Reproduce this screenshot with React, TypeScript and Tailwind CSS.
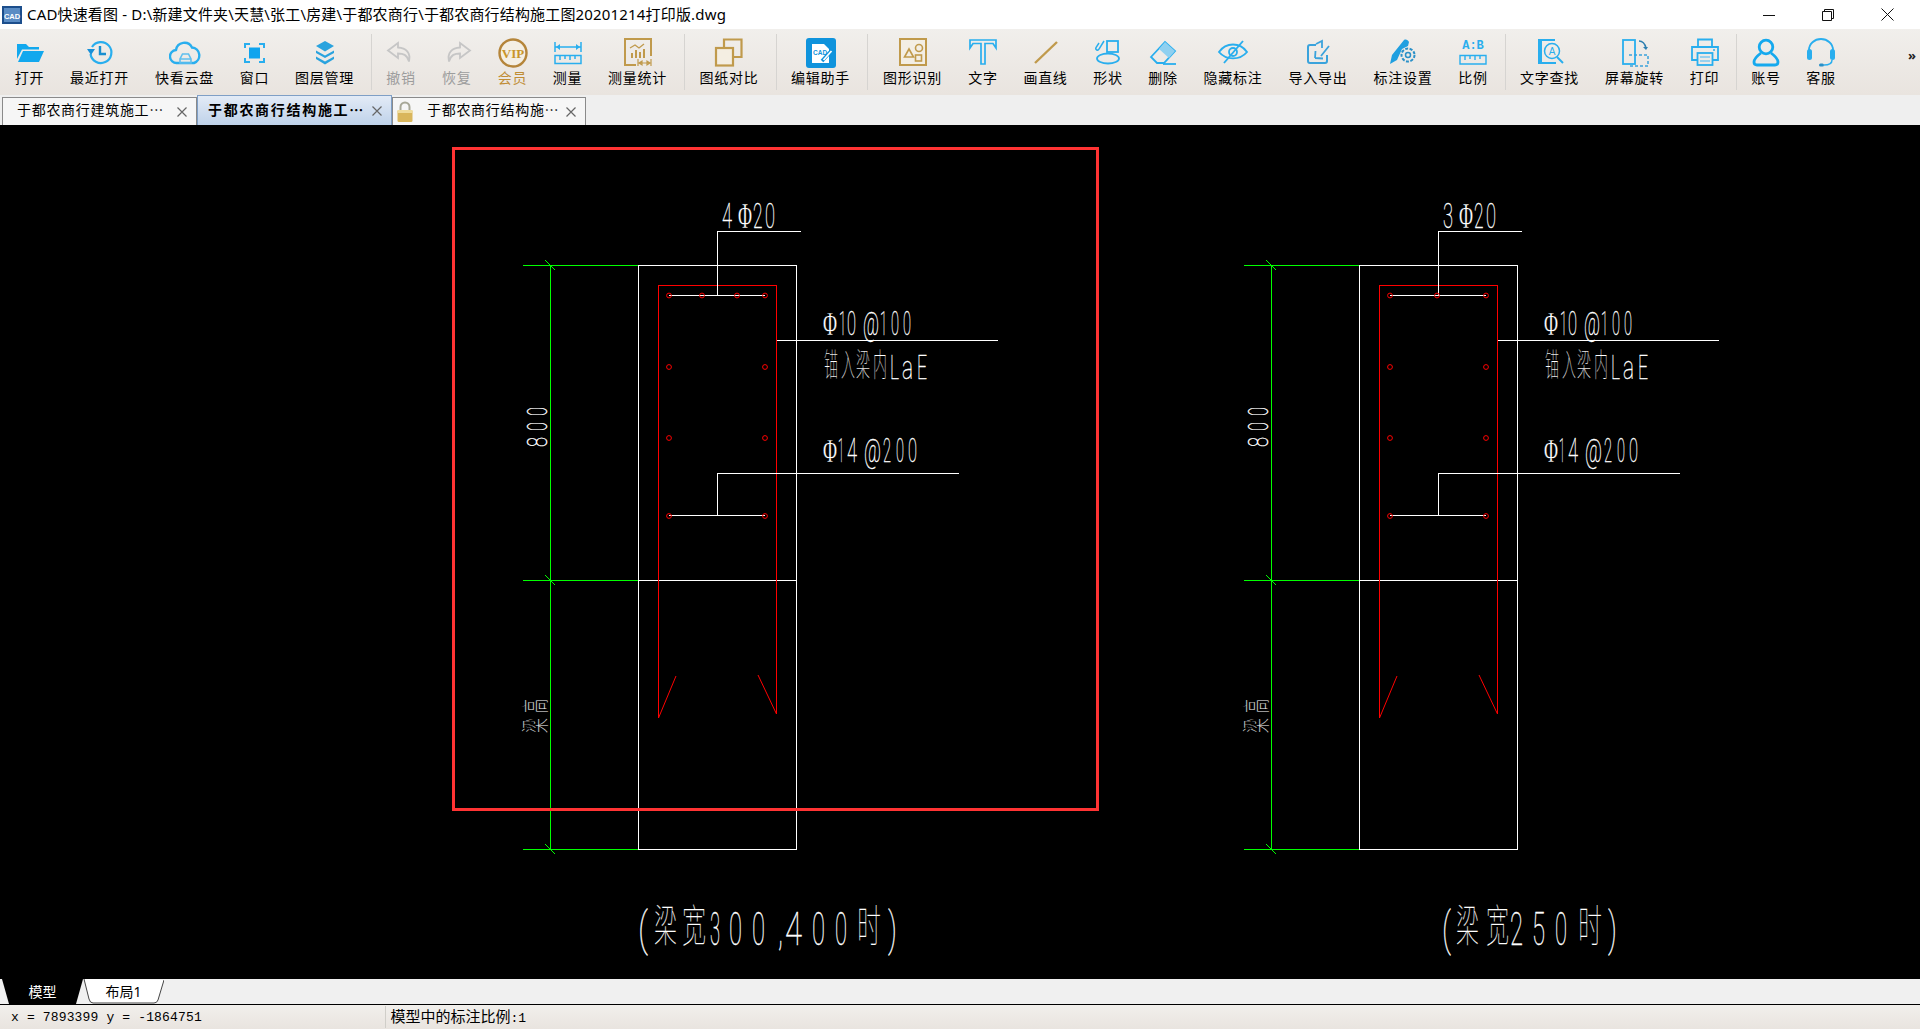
import React from "react";

const B = "#29aeee";
const G = "#c09a4c";

function Ic({ children }: { children: React.ReactNode }) {
  return (
    <svg width="32" height="30" viewBox="0 0 32 30" fill="none" className="block">
      {children}
    </svg>
  );
}

const icons: Record<string, React.ReactNode> = {
  open: (
    <>
      <path d="M3 6h9l3 3h10v2.500H8L3 21z" fill="#12a8ee" />
      <path d="M9 13h21l-5 11H4z" fill="#12a8ee" />
    </>
  ),
  recent: (
    <>
      <path d="M8 9a10.500 10.500 0 1 1-1.500 7" stroke={B} strokeWidth="2.200" />
      <path d="M3 11h8l-4 6z" fill="#1890d8" />
      <path d="M16 8v8h6" stroke="#1a8fd0" strokeWidth="2.400" />
    </>
  ),
  cloud: (
    <>
      <path d="M8 25a6.500 6.500 0 0 1-1-13 8.500 8.500 0 0 1 16-2.500A8 8 0 0 1 25 25z" stroke={B} strokeWidth="2.400" />
      <path d="M11 25v-4l2.500-5h6l2.500 5v4zM11 21h11" stroke="#5fbfee" strokeWidth="1.600" />
    </>
  ),
  win: (
    <>
      <path d="M6 10V6h5M20 6h5v4M25 20v4h-5M11 24H6v-4" stroke={B} strokeWidth="2" />
      <rect x="10" y="9.500" width="11" height="11" fill="#0fa4ee" />
    </>
  ),
  layer: (
    <>
      <path d="M16 3l9 5-9 5.500L7 8z" fill="#2aa3de" />
      <path d="M7 12.500l9 5 9-5v2.500l-9 5-9-5z" fill="#2aa3de" />
      <path d="M7 18.500l9 5 9-5v2.500l-9 5.500-9-5.500z" fill="#2aa3de" />
    </>
  ),
  undo: <path d="M13 5L3 12.500l10 7.500v-4.500c5 0 9 1 11 8 2-9-3-13.500-11-14z" stroke="#c6c6c6" strokeWidth="1.800" />,
  redo: <path d="M19 5l10 7.500-10 7.500v-4.500c-5 0-9 1-11 8-2-9 3-13.500 11-14z" stroke="#c6c6c6" strokeWidth="1.800" />,
  vip: (
    <>
      <circle cx="16" cy="15" r="13.500" fill="#f4efe4" stroke="#b5853a" strokeWidth="2.400" />
      <text x="16" y="19.500" textAnchor="middle" fontSize="13" fontWeight="700" fill="#c9952a" fontFamily="Liberation Serif, serif">VIP</text>
    </>
  ),
  measure: (
    <>
      <path d="M3 4v10M29 4v10M3 9h26" stroke={B} strokeWidth="1.500" />
      <path d="M4 9l4-3v6zM28 9l-4-3v6z" fill={B} />
      <path d="M3 17.500h26v8H3zM8 18v4M13 18v3M18 18v4M23 18v3" stroke={B} strokeWidth="1.500" />
    </>
  ),
  stat: (
    <>
      <path d="M14 27H3V1h26v17" stroke={G} strokeWidth="2" />
      <path d="M8 10l5-3 4 3 5-4" stroke={G} strokeWidth="1.300" />
      <path d="M9 20v-5h2v5zM13 20v-8h2v8zM17 20v-6h2v6zM21 20v-9h2v9z" fill={G} />
      <path d="M16 25h13M16 21v7M29 21v7M17 25l3-2v4zM28 25l-3-2v4z" stroke={G} strokeWidth="1.200" />
    </>
  ),
  compare: (
    <>
      <path d="M11 10V1.500h17.500V19H20" stroke={G} strokeWidth="2.200" />
      <rect x="3" y="10" width="17" height="17.500" fill="#f4eee2" stroke={G} strokeWidth="2.200" />
    </>
  ),
  edit: (
    <>
      <rect x="1" y="0" width="30" height="30" rx="3" fill="#0f93dc" />
      <path d="M7 6h12l5 5v14H7z" fill="#fff" />
      <text x="8" y="17" fontSize="6.500" fontWeight="700" fill="#0f93dc" fontFamily="Liberation Sans, sans-serif">CAD</text>
      <path d="M17 23l10-11" stroke="#0f93dc" strokeWidth="3.500" />
      <path d="M18.500 22l8-9" stroke="#fff" strokeWidth="1.800" />
    </>
  ),
  shape: (
    <>
      <rect x="3" y="1" width="26" height="26" fill="#f3eee4" stroke={G} strokeWidth="2" />
      <path d="M12 11l4.500 8h-9z" stroke={G} strokeWidth="1.600" />
      <circle cx="22" cy="10" r="3.500" stroke={G} strokeWidth="1.600" />
      <rect x="18.500" y="17" width="6" height="6" stroke={G} strokeWidth="1.600" />
    </>
  ),
  text: <path d="M3 2h26v8l-3-4.500H18V26h-4V5.500H6L3 10z" stroke={B} strokeWidth="1.700" />,
  line: <path d="M5 25L27 4" stroke={G} strokeWidth="2.400" />,
  shapes: (
    <>
      <rect x="15" y="3" width="11" height="11" stroke={B} strokeWidth="1.800" />
      <ellipse cx="16" cy="20.500" rx="11" ry="5" stroke={B} strokeWidth="1.800" />
      <path d="M12 3L7 11c-1 2-4 1-3-1.500L7 5" stroke={B} strokeWidth="1.500" />
    </>
  ),
  eraser: (
    <>
      <path d="M4 19L18 4l10 9-11 12H10z" stroke={B} strokeWidth="1.800" />
      <path d="M12 11L18 4l10 9-6 7z" fill="#8fd0f0" />
      <path d="M16 26h13" stroke={B} strokeWidth="1.800" />
    </>
  ),
  eye: (
    <>
      <path d="M2 14c7-10 21-10 28 0-7 8.500-21 8.500-28 0z" stroke={B} strokeWidth="1.900" />
      <circle cx="16" cy="14" r="4" stroke={B} strokeWidth="1.800" />
      <path d="M7 25L26 3" stroke={B} strokeWidth="1.900" />
    </>
  ),
  io: (
    <>
      <path d="M14 7H8a2 2 0 0 0-2 2v14a2 2 0 0 0 2 2h15a2 2 0 0 0 2-2v-6" stroke="#3aa3dc" strokeWidth="2" />
      <path d="M14 6l6-3v7M27 8L19 18M13 20l8 .500M13 20l.500-7" stroke="#3aa3dc" strokeWidth="1.800" />
    </>
  ),
  markset: (
    <>
      <path d="M3 26l2-9L17 2c2-1 4 0 5 2l-1 4-6 3-5 11z" fill="#1f9fe0" />
      <circle cx="21" cy="17" r="6.500" fill="#eceae6" stroke="#2a90c8" strokeWidth="2" strokeDasharray="3 1.500" />
      <circle cx="21" cy="17" r="2.500" stroke="#2a90c8" strokeWidth="1.500" />
    </>
  ),
  scale: (
    <>
      <text x="16" y="11" textAnchor="middle" fontSize="12" fontWeight="700" fill={B} fontFamily="Liberation Mono, monospace">A:B</text>
      <path d="M3 17.500h26v8.500H3zM8 18v4M13 18v3M18 18v4M23 18v3" stroke={B} strokeWidth="1.400" />
    </>
  ),
  find: (
    <>
      <path d="M21 2H5v23h17" stroke={B} strokeWidth="2" />
      <path d="M5 2h3v23H5z" fill={B} />
      <circle cx="18" cy="13" r="7.500" stroke={B} strokeWidth="1.500" />
      <text x="18" y="17" textAnchor="middle" fontSize="10" fill={B} fontFamily="Liberation Sans, sans-serif">A</text>
      <path d="M23 19l6 6" stroke={B} strokeWidth="2" />
    </>
  ),
  rotate: (
    <>
      <rect x="4" y="2" width="12" height="24" stroke={B} strokeWidth="1.800" />
      <path d="M10 17h19v11H10" stroke="#3aa3dc" strokeWidth="1.500" strokeDasharray="3 2" />
      <path d="M20 3c4 0 6 3 7 7" stroke="#2d7fb0" strokeWidth="1.500" />
      <path d="M27 12l-3-3h5z" fill="#2d7fb0" />
    </>
  ),
  print: (
    <>
      <path d="M9 9V1.500h14V9" stroke={B} strokeWidth="1.800" />
      <path d="M8 22H3V9h26v13h-5" stroke={B} strokeWidth="1.800" />
      <rect x="8.500" y="15" width="15" height="12" fill="#eceae6" stroke={B} strokeWidth="1.800" />
      <path d="M11 19h10M11 23h10" stroke="#7cc8ef" strokeWidth="1.500" />
      <circle cx="25" cy="12" r="1" fill={B} />
    </>
  ),
  user: (
    <>
      <circle cx="16" cy="9" r="6.800" stroke="#15a9ee" strokeWidth="2.800" />
      <path d="M11 15C7 18 4 21 4 24c0 2 1 3 3 3h18c2 0 3-1 3-3 0-3-3-6-7-9" stroke="#15a9ee" strokeWidth="2.800" />
    </>
  ),
  service: (
    <>
      <path d="M4 16V12a12 11 0 0 1 24 0v4" stroke={B} strokeWidth="1.800" />
      <rect x="2" y="11" width="5" height="11" rx="2.500" fill={B} />
      <rect x="25" y="11" width="5" height="11" rx="2.500" fill={B} />
      <path d="M27 22c0 3-3 5-8 5" stroke={B} strokeWidth="1.500" />
      <rect x="14" y="25.500" width="5" height="3" rx="1.500" fill="#2a90c8" />
    </>
  ),
};

type Item = { l: string; i: string; w: string; c?: string } | { sep: true };

const W2 = "w-[55px]";
const W3 = "w-[70px]";
const W4 = "w-[85px]";

const items: Item[] = [
  { l: "打开", i: "open", w: W2 },
  { l: "最近打开", i: "recent", w: W4 },
  { l: "快看云盘", i: "cloud", w: W4 },
  { l: "窗口", i: "win", w: W2 },
  { l: "图层管理", i: "layer", w: W4 },
  { sep: true },
  { l: "撤销", i: "undo", w: W2, c: "text-[#9d9d9d]" },
  { l: "恢复", i: "redo", w: "w-[56.500px]", c: "text-[#9d9d9d]" },
  { l: "会员", i: "vip", w: W2, c: "text-[#c08d35]" },
  { l: "测量", i: "measure", w: W2 },
  { l: "测量统计", i: "stat", w: W4 },
  { sep: true },
  { l: "图纸对比", i: "compare", w: W4 },
  { sep: true },
  { l: "编辑助手", i: "edit", w: W4 },
  { sep: true },
  { l: "图形识别", i: "shape", w: "w-[86px]" },
  { l: "文字", i: "text", w: W2 },
  { l: "画直线", i: "line", w: W3 },
  { l: "形状", i: "shapes", w: W2 },
  { l: "删除", i: "eraser", w: W2 },
  { l: "隐藏标注", i: "eye", w: W4 },
  { l: "导入导出", i: "io", w: W4 },
  { l: "标注设置", i: "markset", w: W4 },
  { l: "比例", i: "scale", w: W2 },
  { sep: true },
  { l: "文字查找", i: "find", w: W4 },
  { l: "屏幕旋转", i: "rotate", w: W4 },
  { l: "打印", i: "print", w: W2 },
  { sep: true },
  { l: "账号", i: "user", w: W2 },
  { l: "客服", i: "service", w: W2 },
];

function ToolBar() {
  return (
    <div className="relative flex h-[66px] bg-gradient-to-b from-[#f1efec] to-[#e9e4df] pl-[2px]">
      {items.map((it, n) =>
        "sep" in it ? (
          <div key={n} className="ml-1 mr-[1.500px] mt-[5px] h-[56px] w-px bg-[#d6d4d1]" />
        ) : (
          <div key={n} className={`flex flex-col items-center pt-[9px] ${it.w}`}>
            <Ic>{icons[it.i]}</Ic>
            <span className={`whitespace-nowrap text-[14px] leading-[19px] tracking-[0.7px] ${it.c ?? "text-black"}`}>{it.l}</span>
          </div>
        )
      )}
      <span className="absolute right-[4px] top-[20px] text-[13px] font-bold leading-none text-[#222]">»</span>
    </div>
  );
}

function Close() {
  return (
    <svg width="10" height="10" viewBox="0 0 10 10" className="shrink-0">
      <path d="M.5.5l9 9M9.500.5l-9 9" stroke="#666" strokeWidth="1.200" />
    </svg>
  );
}

function Lock() {
  return (
    <svg width="18" height="22" viewBox="0 0 18 22" className="shrink-0">
      <path d="M4.500 10V6a4.500 4.500 0 0 1 9 0v4" fill="none" stroke="#a8a898" strokeWidth="2" />
      <rect x="1.500" y="9" width="15" height="12" rx="1.500" fill="#d9b65c" />
      <rect x="1.500" y="9" width="15" height="3" fill="#efdc9c" />
    </svg>
  );
}

function DocTabs() {
  return (
    <div className="flex h-[30px] items-end bg-[#efefef] pl-[2px]">
      <div className="flex h-[28px] w-[195px] items-center border border-b-0 border-[#8a8a8a] bg-[#f6f6f6] pl-[14px] pr-[9px]">
        <span className="flex-1 whitespace-nowrap pb-[5px] text-[14px] tracking-[0.7px]">于都农商行建筑施工⋯</span>
        <Close />
      </div>
      <div className="flex h-[30px] w-[195px] items-center border border-b-0 border-[#7f9fc6] bg-gradient-to-b from-[#e3ebf6] to-[#bfd2ea] pl-[10px] pr-[9px]">
        <span className="flex-1 whitespace-nowrap pb-[3px] text-[14px] font-bold tracking-[1.700px]">于都农商行结构施工⋯</span>
        <Close />
      </div>
      <div className="flex h-[28px] w-[194px] items-center border border-b-0 border-[#8a8a8a] bg-[#f6f6f6] pl-[3px] pr-[9px]">
        <Lock />
        <span className="ml-[13px] flex-1 whitespace-nowrap pb-[5px] text-[14px] tracking-[0.7px]">于都农商行结构施⋯</span>
        <Close />
      </div>
    </div>
  );
}

const LAT = "Roboto, Liberation Sans, sans-serif";
const CJK = "Noto Sans CJK SC, sans-serif";

type Tok = [string, number, number];

function Toks({ y, size, toks, cjk }: { y: number; size: number; toks: Tok[]; cjk?: boolean }) {
  return (
    <>
      {toks.map(([s, x, w], n) => {
        const phi = s === "Φ";
        return (
          <text
            key={n}
            x={x}
            y={y}
            textLength={w}
            lengthAdjust="spacingAndGlyphs"
            fontSize={size}
            fontWeight={phi ? 400 : 100}
            fontFamily={phi ? "Liberation Serif, serif" : cjk ? CJK : LAT}
            fill="#fff"
            stroke={cjk ? "#000" : phi ? "#000" : "#fff"}
            strokeWidth={cjk ? 0.15 : phi ? 0.3 : 0.4}
          >
            {s}
          </text>
        );
      })}
    </>
  );
}

function Tick({ y }: { y: number }) {
  return <path d={`M545 ${y - 5}L555 ${y + 5}`} stroke="#00ff00" />;
}

function Beam({ dx, num, dots }: { dx: number; num: string; dots: number[] }) {
  const red = [
    ...dots.map((x) => [x, 295.5]),
    [669, 367],
    [765, 367],
    [669, 438],
    [765, 438],
    [669, 516],
    [765, 516],
  ];
  return (
    <g transform={`translate(${dx} 0)`}>
      <g shapeRendering="crispEdges">
        <path d="M523 265.500H638.500M523 580.500H638.500M523 849.500H638.500M550.500 265V850" stroke="#00ff00" />
        <path d="M638.500 265.500H796.500V849.500H638.500ZM638.500 580.500H796.500" stroke="#fff" fill="none" />
        <path d="M658.500 718V285.500H776.500V714" stroke="#ff0000" fill="none" />
        <path d="M717.500 295V231.500H801M669 295.500H765M777 340.500H998M669 515.500H765M717.500 515V473.500H959" stroke="#fff" fill="none" />
      </g>
      <path d="M658.500 718L676 676M776.500 714L758 675" stroke="#ff0000" />
      <Tick y={265} />
      <Tick y={580} />
      <Tick y={849} />
      {red.map(([x, y], n) => (
        <circle key={n} cx={x} cy={y} r="2.400" fill="none" stroke="#ff0000" />
      ))}
      <Toks
        y={228}
        size={35}
        toks={[
          [num, 722, 10],
          ["Φ", 738, 14],
          ["2", 753, 9.500],
          ["0", 765, 10],
        ]}
      />
      <Toks
        y={335}
        size={34}
        toks={[
          ["Φ", 823, 14],
          ["1", 839, 7],
          ["0", 847, 9],
          ["@", 863, 16],
          ["1", 880, 7],
          ["0", 891, 8],
          ["0", 903, 8],
        ]}
      />
      <Toks
        y={462}
        size={34}
        toks={[
          ["Φ", 823, 14],
          ["1", 838, 6],
          ["4", 847, 10],
          ["@", 864, 17],
          ["2", 883, 8],
          ["0", 896, 8],
          ["0", 908, 9],
        ]}
      />
      <Toks
        y={376}
        size={32}
        cjk
        toks={[
          ["锚", 824, 14],
          ["入", 841, 14],
          ["梁", 856, 14],
          ["内", 873, 14],
        ]}
      />
      <Toks
        y={379}
        size={34}
        toks={[
          ["L", 890, 9],
          ["a", 902, 11],
          ["E", 917, 10],
        ]}
      />
      <g transform="translate(547 447) rotate(-90)">
        <Toks
          y={0}
          size={28}
          toks={[
            ["8", 0, 10],
            ["0", 16, 9],
            ["0", 31, 9],
          ]}
        />
      </g>
      <g transform="translate(546 733) rotate(-90)">
        <Toks
          y={0}
          size={28}
          cjk
          toks={[
            ["梁", 0, 15],
            ["高", 20, 14],
          ]}
        />
      </g>
    </g>
  );
}

function Canvas() {
  return (
    <div className="h-[854px] bg-black">
      <svg width="1920" height="854" viewBox="0 125 1920 854" className="block">
        <Beam dx={0} num="4" dots={[669, 702, 737, 765]} />
        <Beam dx={721} num="3" dots={[669, 716, 765]} />
        <rect x="453.500" y="148.500" width="644" height="661" fill="none" stroke="#ff3333" strokeWidth="3" />
        <Toks
          y={945}
          size={46}
          toks={[
            ["(", 638, 10],
            ["3", 710, 10],
            ["0", 729, 13],
            ["0", 752, 13],
            [",", 778, 5],
            ["4", 785, 17],
            ["0", 812, 13],
            ["0", 835, 12],
            [")", 888, 9],
          ]}
        />
        <Toks
          y={942}
          size={44}
          cjk
          toks={[
            ["梁", 654, 23],
            ["宽", 682, 24],
            ["时", 857, 24],
          ]}
        />
        <Toks
          y={945}
          size={46}
          toks={[
            ["(", 1442, 9],
            ["2", 1510, 13],
            ["5", 1532, 13],
            ["0", 1555, 12],
            [")", 1608, 9],
          ]}
        />
        <Toks
          y={942}
          size={44}
          cjk
          toks={[
            ["梁", 1456, 23],
            ["宽", 1486, 23],
            ["时", 1578, 24],
          ]}
        />
      </svg>
    </div>
  );
}

function SheetTabs() {
  return (
    <div className="flex h-[25px] bg-[#f0f0f0] pl-[2px]">
      <div className="relative flex w-[81px] items-center justify-center pb-[1px]">
        <svg width="81" height="25" viewBox="0 0 81 25" className="absolute inset-0">
          <path d="M0 0L7 25H74L81 0z" fill="#000" />
        </svg>
        <span className="relative text-[14px] text-white">模型</span>
      </div>
      <div className="relative flex w-[81px] items-center justify-center pb-[1px]">
        <svg width="81" height="25" viewBox="0 0 81 25" className="absolute inset-0">
          <path d="M1 0L6 20Q7 24 10 24H71Q74 24 75 21L81 1" fill="#fff" stroke="#444" />
        </svg>
        <span className="relative text-[14px] text-black">布局1</span>
      </div>
    </div>
  );
}

function StatusBar() {
  return (
    <div className="flex h-[25px] items-center border-t border-black bg-gradient-to-b from-[#f1efec] to-[#e9e4df]">
      <div className="h-[22px] w-[385.500px] border-r border-[#d0cec9] pl-[11px] pt-px [font-family:'Liberation_Mono',monospace] text-[13px] leading-[22px] tracking-[0.15px] text-black">
        x = 7893399 y = -1864751
      </div>
      <div className="pl-[5px] text-[15px] leading-[22px] text-black">
        模型中的标注比例<span className="[font-family:'Liberation_Mono',monospace] text-[13px]">:1</span>
      </div>
    </div>
  );
}

function TitleBar() {
  return (
    <div className="flex h-[29px] items-center bg-white">
      <svg width="20" height="18" viewBox="0 0 20 18" className="ml-[2px] shrink-0">
        <rect width="20" height="18" fill="#1c4e8c" />
        <rect x="2" y="2" width="16" height="14" fill="#5a8cc4" />
        <text x="10" y="12.500" textAnchor="middle" fontSize="7.500" fontWeight="700" fill="#fff" fontFamily="Liberation Sans, sans-serif">CAD</text>
      </svg>
      <span className="ml-[5px] whitespace-nowrap text-[15px] tracking-[0.17px] text-black">CAD快速看图 - D:\新建文件夹\天慧\张工\房建\于都农商行\于都农商行结构施工图20201214打印版.dwg</span>
      <div className="ml-auto flex items-center pr-[26px]">
        <svg width="12" height="12" viewBox="0 0 12 12" className="mr-[47px]">
          <path d="M0 6.500H12" stroke="#111" />
        </svg>
        <svg width="12" height="12" viewBox="0 0 12 12" className="mr-[47px]">
          <path d="M.5 2.500h9v9h-9zM2.500 2.500v-2h9v9h-2" fill="none" stroke="#111" />
        </svg>
        <svg width="13" height="13" viewBox="0 0 13 13">
          <path d="M.5.5l12 12M12.500.5l-12 12" stroke="#111" />
        </svg>
      </div>
    </div>
  );
}

export default function App() {
  return (
    <div className="h-[1030px] w-[1920px] overflow-hidden [font-family:'Noto_Sans','Noto_Sans_CJK_SC',sans-serif]">
      <TitleBar />
      <ToolBar />
      <DocTabs />
      <Canvas />
      <SheetTabs />
      <StatusBar />
    </div>
  );
}
